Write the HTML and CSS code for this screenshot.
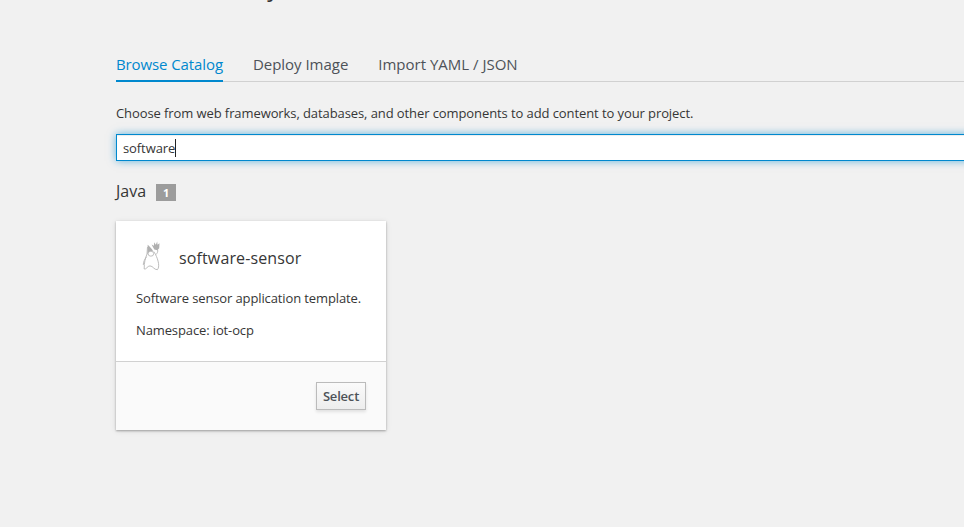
FILE: index.html
```
<!DOCTYPE html>
<html lang="en">
<head>
<meta charset="utf-8">
<title>Add to Project</title>
<link rel="stylesheet" href="styles.css">
</head>
<body>
<main class="page">
  <div class="title-clip"><h1>Add to Project</h1></div>
  <nav class="tabs">
    <a class="tab active">Browse Catalog</a>
    <a class="tab">Deploy Image</a>
    <a class="tab">Import YAML / JSON</a>
  </nav>
  <p class="intro">Choose from web frameworks, databases, and other components to add content to your project.</p>
  <div class="search"><span>software</span><i class="caret"></i></div>
  <h2 class="category">Java <span class="count">1</span></h2>
  <article class="card">
    <div class="card-body">
      <header class="card-head">
        <svg class="duke" width="20" height="30" viewBox="0 0 20 30">
          <path d="M5.7 3.8C7.5 5.5 9.5 7.6 11 9.8L8.7 10.6L5.3 13.4Z" fill="#b0b0b0"/>
          <path d="M9.6 3.4L12 4.8L12.1 1.2L13.8 3.8L15.2 .6L15.5 3.8L17.5 2.2L17.2 7.2L15.4 9.2L12.3 8.6L11.2 6.4Z" fill="#b0b0b0"/>
          <path d="M5.5 6L5 13C3.4 17 2 21.5 2.2 28C4.5 28.7 5.3 24.8 8 24.9C11.2 25 11.8 28.8 15.4 28.7C17.8 26 16.6 19.5 13.4 13.2L11.7 10.5M15.6 9C16.1 10.4 15.4 12.2 13.8 13.7M4.6 15.7C2.8 18 1.2 21 1.3 24" fill="none" stroke="#b5b5b5" stroke-width=".9"/>
          <ellipse cx="8.9" cy="12.7" rx="2.8" ry="2.5" fill="#fff" stroke="#b9b9b9" stroke-width=".9"/>
        </svg>
        <h3>software-sensor</h3>
      </header>
      <p>Software sensor application template.</p>
      <p>Namespace: iot-ocp</p>
    </div>
    <footer class="card-foot"><button class="select">Select</button></footer>
  </article>
</main>
</body>
</html>
```
FILE: styles.css
```
* { box-sizing: border-box; }
html { background: #f1f1f1; }
body {
  margin: 0;
  min-height: 100vh;
  color: #363636;
  font: 13px/22px "Open Sans", sans-serif;
  letter-spacing: -.09px;
}
h1, h2, h3, p { margin: 0; font-weight: 400; }
.page {
  min-height: 100vh;
  padding-left: 116px;
  overflow: hidden;
}
.title-clip {
  height: 50px;
  overflow: hidden;
}
.title-clip h1 {
  margin: -29px 0 0 34px;
  font-size: 24px;
  line-height: 32px;
  letter-spacing: 0;
}
.tabs {
  display: flex;
  gap: 30px;
  height: 32px;
  border-bottom: 1px solid #d1d1d1;
}
.tab {
  height: 32px;
  color: #4d5258;
  font-size: 15px;
  line-height: 29px;
  letter-spacing: -.1px;
}
.tab.active {
  color: #0088ce;
  border-bottom: 2px solid #0088ce;
}
.tab:nth-child(2) { letter-spacing: -.03px; }
.tab:last-child { letter-spacing: 0; }
.intro { padding: 20px 0 10px; }
.search {
  display: flex;
  align-items: center;
  height: 27px;
  margin-right: -20px;
  padding: 1px 6px 0;
  background: #fff;
  border: 1px solid #0088ce;
  box-shadow: inset 0 1px 1px rgba(3,3,3,.075), 0 0 8px rgba(0,136,206,.6);
}
.caret { width: 1px; height: 18px; background: #222; }
.category {
  display: flex;
  align-items: center;
  gap: 10px;
  height: 22px;
  margin: 19px 0 19px;
  font-size: 16px;
  letter-spacing: 0;
}
.count {
  width: 20px;
  height: 17px;
  margin-top: 2px;
  background: #9c9c9c;
  color: #fff;
  font-size: 11px;
  font-weight: 700;
  line-height: 17px;
  text-align: center;
}
.card {
  width: 270px;
  background: #fff;
  box-shadow: 0 1px 2px rgba(0,0,0,.3), 0 1px 6px rgba(0,0,0,.1);
}
.card-body {
  height: 140px;
  padding: 20px 20px 0;
}
.card-head {
  display: flex;
  align-items: center;
  height: 32px;
  margin-bottom: 14px;
}
.duke { margin: -2px 0 0 6px; }
.card-head h3 {
  margin: 1px 0 0 17px;
  font-size: 16px;
  letter-spacing: .13px;
}
.card-body p {
  margin-bottom: 10px;
  letter-spacing: -.12px;
}
.card-foot {
  display: flex;
  justify-content: flex-end;
  height: 69px;
  padding: 20px;
  background: #fafafa;
  border-top: 1px solid #d1d1d1;
}
.select {
  width: 50px;
  height: 28px;
  padding: 0;
  border: 1px solid #bbb;
  background: linear-gradient(#fafafa, #ededed);
  box-shadow: 0 2px 3px rgba(3,3,3,.1);
  color: #4d5258;
  font: 600 13px/22px "Open Sans", sans-serif;
  letter-spacing: -.2px;
}
```
